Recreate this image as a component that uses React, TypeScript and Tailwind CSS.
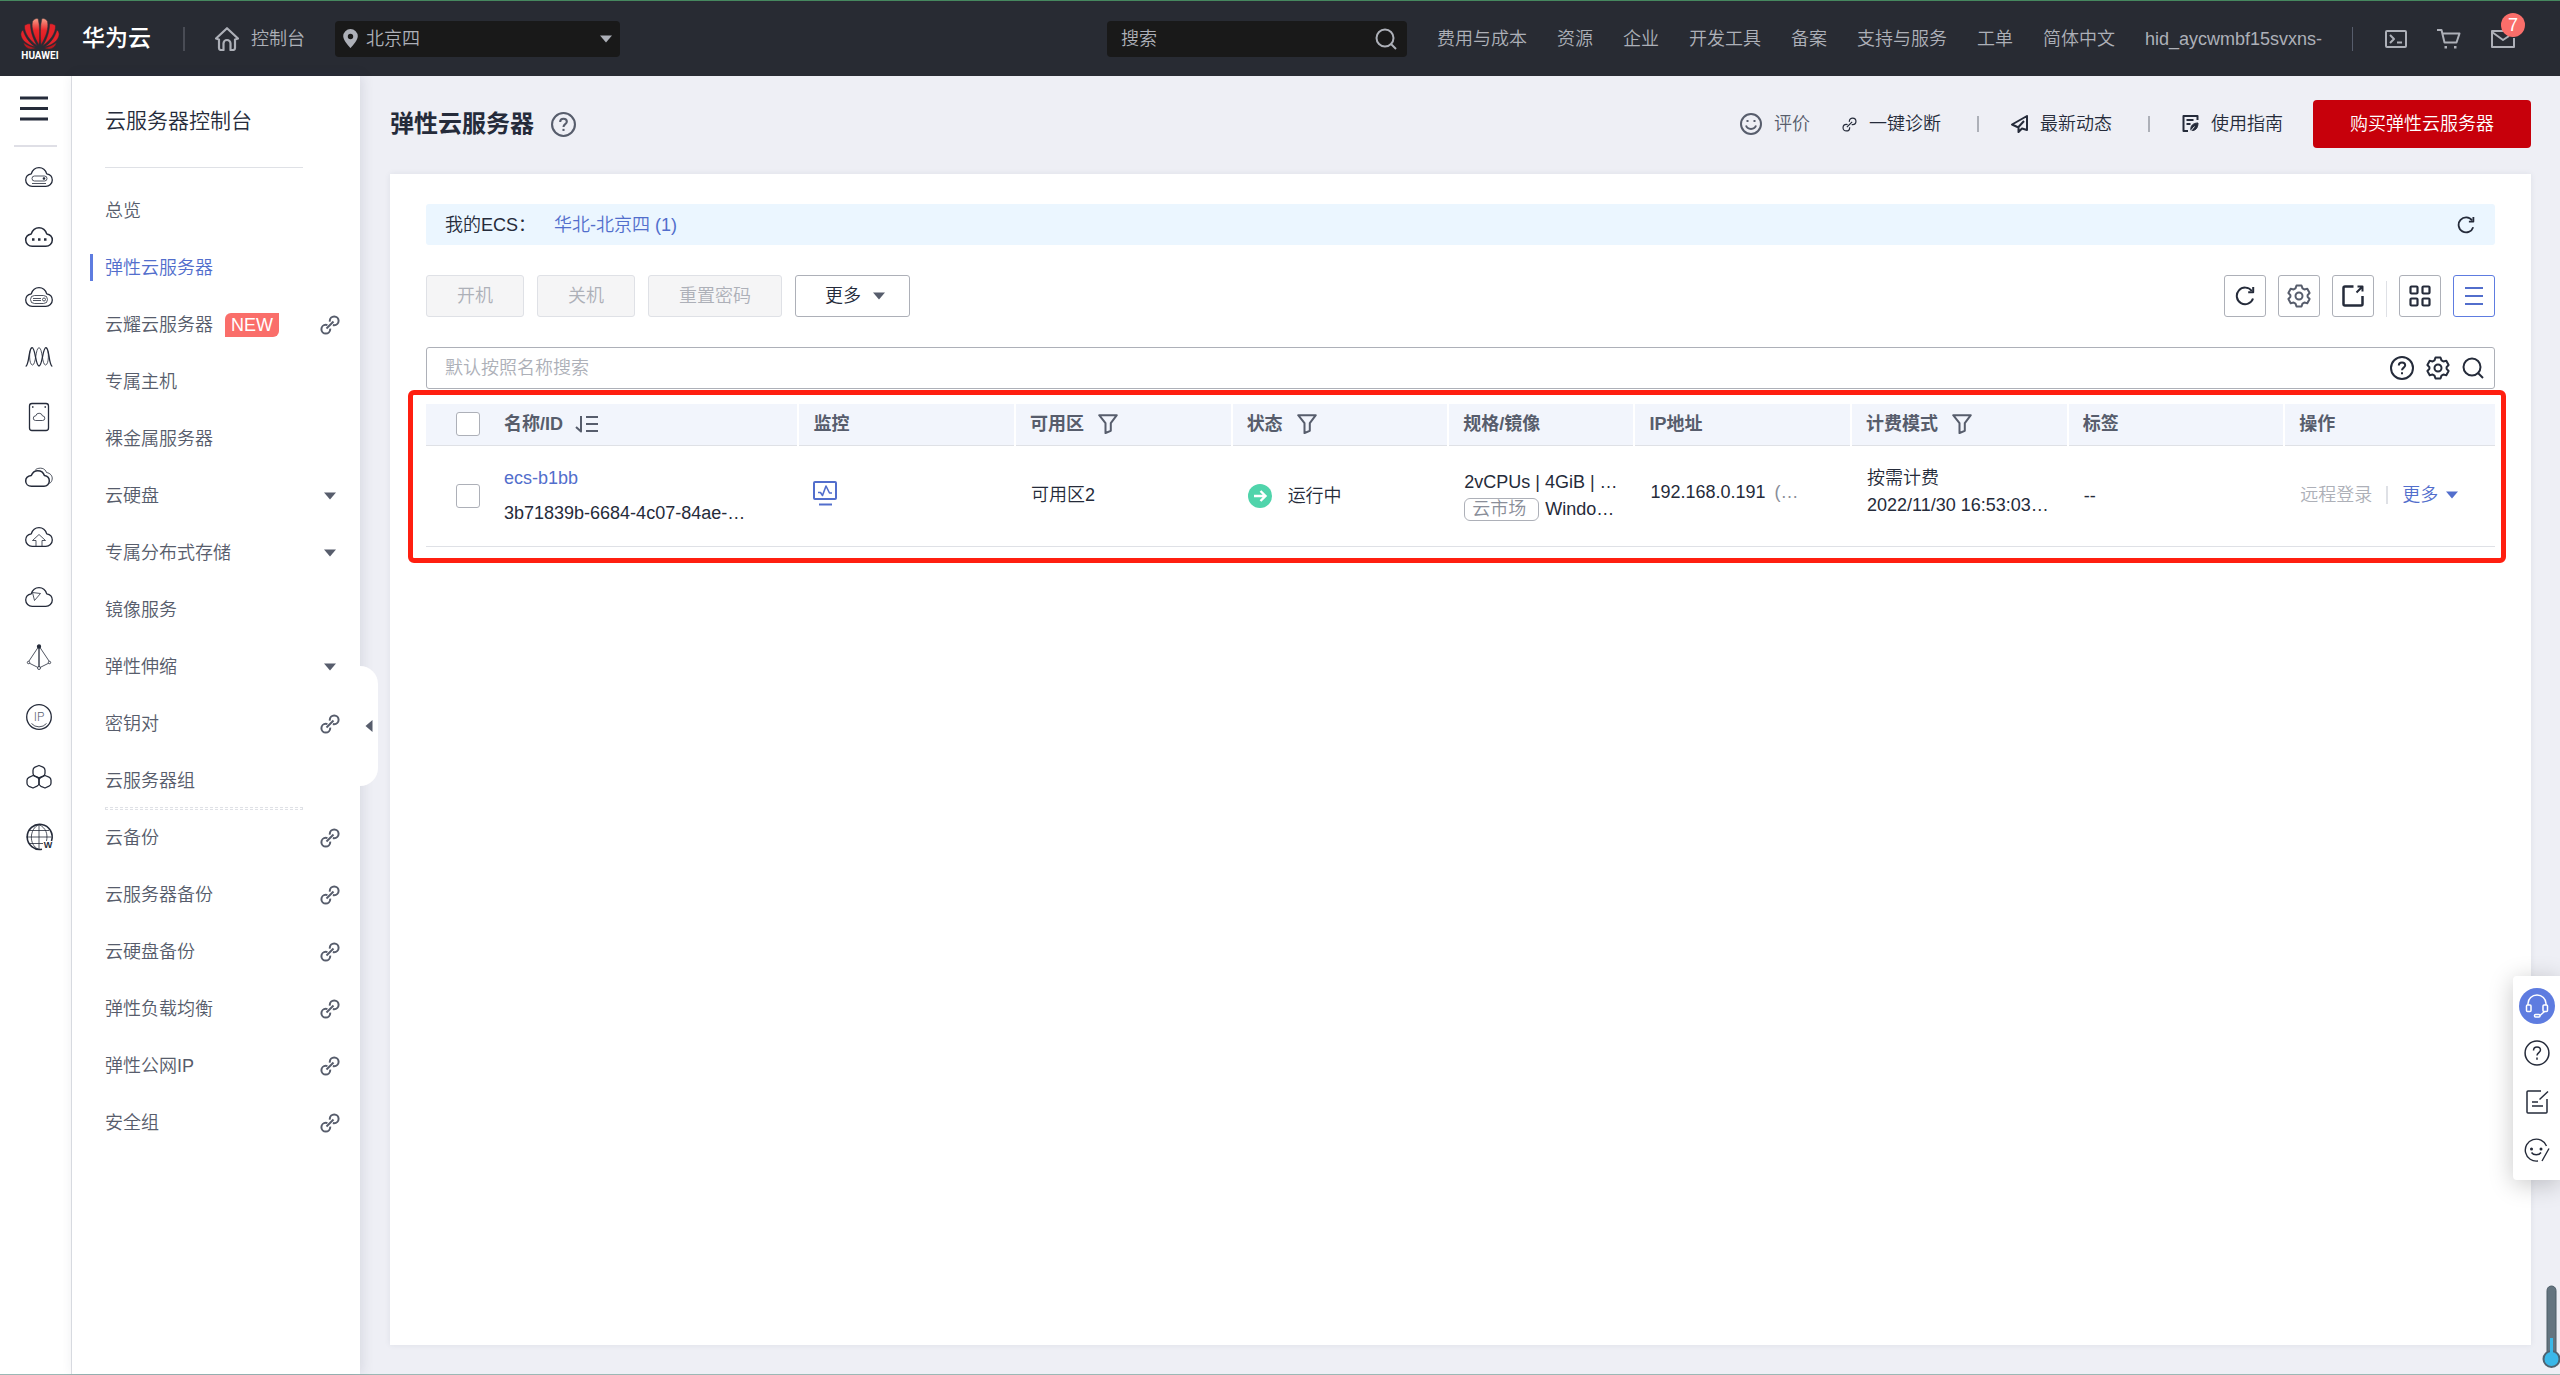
import { ReactNode } from 'react';
import clsx from 'clsx';

const CLOUD =
  'M7.2 19.3h13.6c3.6 0 6.500-2.700 6.500-6.200 0-3.300-2.400-5.700-5.600-6.200C20.500 3 17.800.7 14 .7S7.500 3 6.300 6.900C3.100 7.400.7 9.800.7 13.100c0 3.500 2.900 6.200 6.500 6.200z';

interface IconProps {
  w: number;
  h?: number;
  sw?: number;
  box?: string;
  children: ReactNode;
  className?: string;
}

function Icon({ w, h = w, sw = 2, box, children, className }: IconProps) {
  return (
    <svg
      width={w}
      height={h}
      viewBox={box || `0 0 ${w} ${h}`}
      fill="none"
      stroke="currentColor"
      strokeWidth={sw}
      strokeLinejoin="round"
      className={clsx('shrink-0', className)}
      aria-hidden="true"
    >
      {children}
    </svg>
  );
}

const Caret = ({ className }: { className?: string }) => (
  <svg width="12" height="8" viewBox="0 0 12 8" className={clsx('shrink-0', className)} aria-hidden="true">
    <path d="M0 .5h12L6 7.500z" fill="currentColor" />
  </svg>
);

const LinkIcon = ({ size = 20, sw = 2 }: { size?: number; sw?: number }) => (
  <Icon w={size} box="0 0 20 20" sw={sw}>
    <circle cx="14.200" cy="5.800" r="4.400" strokeDasharray="23.150 4.500" strokeDashoffset="-12.600" />
    <circle cx="5.800" cy="14.200" r="4.400" strokeDasharray="23.150 4.500" strokeDashoffset="-26.400" />
    <path d="M6.500 13.500l7-7" />
  </Icon>
);

const HelpIcon = ({ size = 24, sw = 2 }: { size?: number; sw?: number }) => (
  <Icon w={size} box="0 0 24 24" sw={sw}>
    <circle cx="12" cy="12" r="11" />
    <path d="M8.800 9.600c0-2 1.300-3.200 3.200-3.200s3.200 1.200 3.200 2.900c0 2.200-3.200 2.500-3.200 5" />
    <path d="M12 16.200v2" />
  </Icon>
);

const GearIcon = ({ sw = 2 }: { sw?: number }) => (
  <Icon w={24} sw={sw}>
    <path d="M9.500 1.500h5l1 2.900 1.800 1 3-.6 2.300 4.200-2 2.200v1.600l2 2.200-2.300 4.200-3-.6-1.800 1-1 2.900h-5l-1-2.900-1.800-1-3 .6L1.400 15l2-2.200v-1.600l-2-2.200 2.300-4.200 3 .6 1.800-1z" />
    <circle cx="12" cy="12" r="3.500" />
  </Icon>
);

const SearchIcon = () => (
  <Icon w={22} sw={2}>
    <circle cx="10" cy="10" r="8.500" />
    <path d="M16 16l5 5" />
  </Icon>
);

const RefreshIcon = ({ size = 20 }: { size?: number }) => (
  <Icon w={size} box="0 0 20 20" sw={2}>
    <path d="M18 12.500A8.300 8.300 0 1 1 16.800 5" />
    <path d="M18.200 1v5.200h-5" />
  </Icon>
);

const FunnelIcon = () => (
  <Icon w={20} sw={2}>
    <path d="M1.200 1.200h17.600l-6 8v7.600L7.500 19V9.200z" />
  </Icon>
);

function HuaweiLogo() {
  return (
    <svg width="40" height="44" viewBox="0 0 40 44" className="shrink-0" role="img" aria-label="HUAWEI">
      <defs>
        <linearGradient id="petal" x1="0" y1="0" x2="0" y2="1">
          <stop offset="0" stopColor="#f7a08a" />
          <stop offset=".45" stopColor="#e8262a" />
          <stop offset="1" stopColor="#d9121c" />
        </linearGradient>
      </defs>
      <g fill="url(#petal)" stroke="#282b33" strokeWidth=".5">
        <path d="M19 28C14 20 11 11 12.500 4.500c1-2.500 3.500-3 5.500-3 2 7 2 17.500 1 26.500z" />
        <path d="M21 28c5-8 8-17 6.500-23.500-1-2.500-3.500-3-5.500-3-2 7-2 17.500-1 26.500z" />
        <path d="M17.500 29C10 24 4 16 4.500 8.500c2-1.500 4-2 6-1.500 0 8 3 16 7 22z" fill="#e3232a" />
        <path d="M22.500 29C30 24 36 16 35.500 8.500c-2-1.500-4-2-6-1.500 0 8-3 16-7 22z" fill="#e3232a" />
        <path d="M15.500 30C7 28 1 23 .8 17c.4-2.500 1.200-3.500 2.400-3.800C5 20 10 26.500 15.500 30z" fill="#e3232a" />
        <path d="M24.500 30c8.500-2 14.500-7 14.700-13-.4-2.500-1.200-3.500-2.400-3.800C35 20 30 26.500 24.500 30z" fill="#e3232a" />
        <path d="M16 31c-3.500 1.500-7 1.500-9.500-.5C4.500 29 3.800 27.500 3.500 25.500 8 28.500 11 30 16 31z" fill="#b81a20" />
        <path d="M24 31c3.500 1.500 7 1.500 9.500-.5 2-1.500 2.700-3 3-5-4.500 3-7.500 4.500-12.500 5.500z" fill="#b81a20" />
      </g>
      <text x="20" y="41.500" textAnchor="middle" fontSize="10" fontWeight="700" fill="#fff" fontFamily="Roboto, sans-serif">
        HUAWEI
      </text>
    </svg>
  );
}

const TOP_LINKS = ['费用与成本', '资源', '企业', '开发工具', '备案', '支持与服务', '工单', '简体中文', 'hid_aycwmbf15svxns-'];

function TopBar() {
  return (
    <header className="flex h-19 items-center border-t border-[#46885f] bg-[#282b33] text-[#adb0b8]">
      <a href="#home" className="ml-5 flex items-center gap-5.5 text-white">
        <HuaweiLogo />
        <span className="text-[23px] font-medium">华为云</span>
      </a>
      <span className="ml-8 h-6 w-0.5 bg-[#494c55]" />
      <a href="#console" className="ml-7.5 flex items-center gap-3">
        <Icon w={24} sw={2.200}>
          <path d="M12 1.200L23 11.500l-3 1V21q0 2-2 2h-2.500v-6.500a3.500 3.500 0 0 0-7 0V23H6q-2 0-2-2v-8.500l-3-1z" />
        </Icon>
        控制台
      </a>
      <div className="ml-7.5 flex h-9 w-[285px] items-center rounded bg-[#191919] px-2">
        <svg width="15" height="19" viewBox="0 0 15 19" aria-hidden="true">
          <path fillRule="evenodd" fill="currentColor" d="M7.500 0A7.300 7.300 0 0 0 .2 7.300C.2 12 7.500 19 7.500 19s7.300-7 7.300-11.700A7.300 7.300 0 0 0 7.500 0zm0 4.800a2.700 2.700 0 1 1 0 5.400 2.700 2.700 0 0 1 0-5.400z" />
        </svg>
        <select aria-label="区域" className="ml-2 flex-1 appearance-none bg-transparent">
          <option>北京四</option>
        </select>
        <Caret />
      </div>
      <div className="mr-7.5 ml-auto flex h-9 w-[300px] items-center rounded bg-[#191919] pr-2.5 pl-3.5">
        <input type="search" aria-label="搜索" placeholder="搜索" className="min-w-0 flex-1 bg-transparent placeholder:text-[#adb0b8]" />
        <SearchIcon />
      </div>
      <nav className="flex items-center gap-7.5 whitespace-nowrap">
        {TOP_LINKS.map(label => (
          <a key={label} href="#top">{label}</a>
        ))}
      </nav>
      <span className="ml-7.5 h-6 w-px bg-[#575d6c]" />
      <div className="mr-[45px] ml-8 flex items-center gap-7.5">
        <button aria-label="CloudShell">
          <Icon w={22} h={18}>
            <rect x="1" y="1" width="20" height="16" rx="1" />
            <path d="M5 5l4 4-4 4M12 12.500h5" />
          </Icon>
        </button>
        <button aria-label="购物车">
          <Icon w={24} h={20}>
            <path d="M0 1h4.500l3 12.500h12L22.500 4.500H6" />
            <path d="M7.500 18.200h2.500M17 18.200h2.500" strokeWidth="2.600" />
          </Icon>
        </button>
        <button aria-label="消息" className="relative">
          <Icon w={24} h={20}>
            <path d="M15 2H1v16h22V9" />
            <path d="M1 3l11 8 6-4" />
          </Icon>
          <span className="absolute -top-4 left-2.5 flex size-6 items-center justify-center rounded-full bg-[#fa6e6a] text-white">7</span>
        </button>
      </div>
    </header>
  );
}

const RAIL_ICONS: { name: string; icon: ReactNode }[] = [
  {
    name: 'ECS',
    icon: (
      <>
        <path d={CLOUD} />
        <rect x="7" y="9" width="15" height="5" rx="2.500" strokeWidth=".8" />
        <path d="M7 16.500h14" strokeWidth=".8" />
        <circle cx="19" cy="11.500" r=".7" fill="currentColor" />
      </>
    ),
  },
  {
    name: 'HECS',
    icon: (
      <>
        <path d={CLOUD} strokeWidth="1.500" />
        <path d="M7 12.500h2.500M13 12.500h2.500M19 12.500h2.500" strokeWidth="2.500" />
      </>
    ),
  },
  {
    name: 'BMS',
    icon: (
      <>
        <path d={CLOUD} />
        <rect x="5.500" y="8.500" width="17" height="8" rx="4" strokeWidth=".8" />
        <path d="M8 11.500h8M8 13.500h8" strokeWidth=".8" />
        <circle cx="19" cy="12.500" r="1.500" strokeWidth=".8" />
      </>
    ),
  },
  {
    name: 'AS',
    icon: (
      <>
        <path d="M.7 19.500C4.500 18 3.500.7 7 .7S10.500 19 14 19 17.500.7 21 .7 23.500 18 27.300 19.500" />
        <path d="M7 .7C3.500 3 4 18 7.500 18S10.500.7 14 .7 17 18 20.500 18 24.500 3 21 .7" strokeWidth=".8" />
      </>
    ),
  },
  {
    name: 'EVS',
    icon: (
      <>
        <rect x="4.500" y="-3.500" width="19" height="27" rx="2.500" />
        <path d="M10.500 13.500h7a2.300 2.300 0 0 0 0-4.600 3.500 3.500 0 0 0-6.800 0 2.300 2.300 0 0 0-.2 4.600z" strokeWidth=".8" />
        <path d="M7 0h1.500M19.500 0H21" />
      </>
    ),
  },
  {
    name: 'CBR',
    icon: (
      <>
        <path d="M6.500 19.300H19c3 0 5.300-2.400 5.300-5.400 0-2.900-2-4.900-4.900-5.300C18.300 5.200 16 3.700 12.800 3.700S7.500 5.500 6.300 8.600C3 9 .7 11 .7 14c0 3 2.500 5.300 5.800 5.300z" strokeWidth="1.500" />
        <path d="M10.500 2.500C15 0 20 1 21.500 5.500c4 .7 6 3.500 5.700 6.500-.2 2-1.200 3.500-2.700 4.500" strokeWidth=".8" />
      </>
    ),
  },
  {
    name: 'OBS',
    icon: (
      <>
        <path d={CLOUD} />
        <path d="M11 19v-5.500H7.500L14 7.500l6.500 6H17V19" strokeWidth=".8" />
      </>
    ),
  },
  {
    name: 'SFS',
    icon: (
      <>
        <path d={CLOUD} />
        <path d="M7.500 5.500l8 1-6 7z" strokeWidth=".8" />
      </>
    ),
  },
  {
    name: 'ELB',
    icon: (
      <>
        <path d="M14 0v21" />
        <path d="M14-1L3 15.500 14 21l11-5.500z" strokeWidth=".8" />
        <circle cx="14" cy="-.5" r="1.500" fill="currentColor" />
        <circle cx="3.500" cy="15.500" r="1.200" fill="#fff" strokeWidth=".8" />
        <circle cx="24.500" cy="15.500" r="1.200" fill="#fff" strokeWidth=".8" />
        <circle cx="14" cy="21" r="1.500" fill="#fff" strokeWidth=".8" />
      </>
    ),
  },
  {
    name: 'EIP',
    icon: (
      <>
        <circle cx="14" cy="10" r="12.300" />
        <path d="M6.500 16.500a10 10 0 0 0 15 0" strokeWidth=".8" />
        <text x="14" y="14" textAnchor="middle" fontSize="12" fontFamily="Roboto, sans-serif" fill="#575d6c" stroke="none">IP</text>
      </>
    ),
  },
  {
    name: 'VPC',
    icon: (
      <>
        <path d="M14-1.500l4 1.700q2 1 2 3v3q0 2-2 3l-4 1.700-4-1.700q-2-1-2-3v-3q0-2 2-3z" />
        <path d="M8 8.500l4 1.700q2 1 2 3v3q0 2-2 3L8 21l-4-1.700q-2-1-2-3v-3q0-2 2-3z" />
        <path d="M20 8.500l4 1.700q2 1 2 3v3q0 2-2 3L20 21l-4-1.700q-2-1-2-3v-3q0-2 2-3z" />
      </>
    ),
  },
  {
    name: 'DNS',
    icon: (
      <>
        <path d="M26.500 14A12.500 12.500 0 1 0 17 22.200" strokeWidth="1.600" />
        <path d="M14-2.500v25M1.500 10h25M4 3.500h20M4 16.500h14" strokeWidth=".8" />
        <path d="M14-2.500C4 2 4 18 13 22M14-2.500C21 1 23 7 21.500 14" strokeWidth=".8" />
        <text x="23" y="21" textAnchor="middle" fontSize="9" fontWeight="700" fill="currentColor" stroke="none">W</text>
      </>
    ),
  },
];

function ServiceRail() {
  return (
    <aside className="w-18 shrink-0 border-r border-[#dfe1e6] bg-white text-[#252b3a]">
      <div className="flex h-[69px] items-center px-5 pb-1">
        <button aria-label="服务列表">
          <Icon w={28} h={25} sw={3}>
            <path d="M0 2h28M0 12.500h28M0 23h28" />
          </Icon>
        </button>
      </div>
      <div className="mx-3.5 h-0.5 bg-[#dfdfe6]" />
      <ul>
        {RAIL_ICONS.map(({ name, icon }) => (
          <li key={name}>
            <a href={`#${name}`} aria-label={name} className="flex h-15 items-center justify-center pl-1.5">
              <Icon w={28} h={20} sw={1.300} className="overflow-visible">{icon}</Icon>
            </a>
          </li>
        ))}
      </ul>
    </aside>
  );
}

interface MenuItem {
  label: string;
  active?: boolean;
  isNew?: boolean;
  end?: 'link' | 'caret';
  dividerAfter?: boolean;
}

const MENU: MenuItem[] = [
  { label: '总览' },
  { label: '弹性云服务器', active: true },
  { label: '云耀云服务器', isNew: true, end: 'link' },
  { label: '专属主机' },
  { label: '裸金属服务器' },
  { label: '云硬盘', end: 'caret' },
  { label: '专属分布式存储', end: 'caret' },
  { label: '镜像服务' },
  { label: '弹性伸缩', end: 'caret' },
  { label: '密钥对', end: 'link' },
  { label: '云服务器组', dividerAfter: true },
  { label: '云备份', end: 'link' },
  { label: '云服务器备份', end: 'link' },
  { label: '云硬盘备份', end: 'link' },
  { label: '弹性负载均衡', end: 'link' },
  { label: '弹性公网IP', end: 'link' },
  { label: '安全组', end: 'link' },
];

function SideMenu() {
  return (
    <aside className="relative w-72 shrink-0 bg-white shadow-[2px_0_12px_rgba(40,50,80,0.12)]">
      <h2 className="flex h-[91px] items-center pl-[33px] text-[21px] text-[#252b3a]">云服务器控制台</h2>
      <div className="ml-[33px] h-px w-[198px] bg-[#dfe1e6]" />
      <ul className="mt-3.5 text-[#575d6c]">
        {MENU.map(item => (
          <li key={item.label}>
            <a href="#menu" className="flex h-[57px] items-center pr-5">
              <span className={clsx('ml-[18px] h-[27px] w-[3px]', item.active && 'bg-[#5e7ce0]')} />
              <span className={clsx('ml-3', item.active && 'text-[#526ecc]')}>{item.label}</span>
              {item.isNew && (
                <span className="ml-3 flex h-6 items-center rounded-tl-md rounded-br-md bg-[#fa6e6a] px-1.5 text-white">NEW</span>
              )}
              <span className="ml-auto flex w-5 justify-center">
                {item.end === 'link' && <LinkIcon />}
                {item.end === 'caret' && <Caret />}
              </span>
            </a>
            {item.dividerAfter && <div className="-mt-0.5 -mb-px ml-[33px] h-[3px] w-[198px] border border-dashed border-[#dfe1e6]" />}
          </li>
        ))}
      </ul>
      <button
        aria-label="收起菜单"
        className="absolute top-[590px] left-full flex h-[120px] w-[18px] items-center justify-center rounded-r-[18px] bg-white text-[#575d6c]"
      >
        <Caret className="rotate-90" />
      </button>
    </aside>
  );
}

function PageHeading() {
  return (
    <div className="flex h-[98px] items-center pb-0.5 text-[#252b3a]">
      <h1 className="text-2xl font-bold">弹性云服务器</h1>
      <button aria-label="帮助" className="ml-[17px] text-[#575d6c]"><HelpIcon size={25} /></button>
      <a href="#rate" className="ml-auto flex items-center gap-3 text-[#575d6c]">
        <Icon w={22} sw={2}>
          <circle cx="11" cy="11" r="10" />
          <path d="M6 12.500c1.500 4.500 8.500 4.500 10 0M7.500 7v2M14.500 7v2" />
        </Icon>
        评价
      </a>
      <a href="#diagnose" className="ml-8 flex items-center gap-3"><LinkIcon size={15} sw={1.600} />一键诊断</a>
      <span className="mr-8 ml-9 h-4 w-0.5 bg-[#adb0b8]" />
      <a href="#news" className="flex items-center gap-3">
        <Icon w={17} h={18} sw={2}>
          <path d="M16 1v14l-5-1.500L7.500 17v-4.500L1 9.500zM7.500 12L13 6" />
        </Icon>
        最新动态
      </a>
      <span className="mr-8 ml-9 h-4 w-0.5 bg-[#adb0b8]" />
      <a href="#guide" className="flex items-center gap-3">
        <Icon w={17} h={18} sw={2}>
          <path d="M15.500 5V1H1.500v15H6M4.500 5h7M4.500 9h4" />
          <path d="M16 8c-5 0-8 3-7 7.500 4.500.5 7-2.500 7-7.500z" fill="currentColor" strokeWidth="1" />
          <path d="M7.500 17.500l5-6" stroke="#eeeff5" strokeWidth="1" />
        </Icon>
        使用指南
      </a>
      <button className="ml-7.5 h-12 rounded-sm bg-[#c7000b] px-[37px] text-white">购买弹性云服务器</button>
    </div>
  );
}

function ToolButton({ label, active, children }: { label: string; active?: boolean; children: ReactNode }) {
  return (
    <button
      aria-label={label}
      className={clsx(
        'flex size-[42px] items-center justify-center rounded-[3px] border',
        active ? 'border-[#5e7ce0] text-[#526ecc]' : 'border-[#adb0b8]'
      )}
    >
      {children}
    </button>
  );
}

function Toolbar() {
  return (
    <div className="mt-7.5 flex gap-[13px] text-[#252b3a]">
      {['开机', '关机', '重置密码'].map(label => (
        <button key={label} disabled className="h-[42px] rounded-[3px] border border-[#dfe1e6] bg-[#f5f5f6] px-[30px] text-[#adb0b8]">
          {label}
        </button>
      ))}
      <button className="flex h-[42px] items-center gap-3 rounded-[3px] border border-[#adb0b8] pr-6 pl-[29px]">
        更多 <Caret className="text-[#575d6c]" />
      </button>
      <div className="ml-auto flex items-center gap-3">
        <ToolButton label="刷新"><RefreshIcon /></ToolButton>
        <ToolButton label="设置"><span className="text-[#575d6c]"><GearIcon /></span></ToolButton>
        <ToolButton label="导出">
          <Icon w={22} sw={2.500}>
            <path d="M11.500 1.500H3q-1.500 0-1.500 1.500v16q0 1.500 1.500 1.500h16q1.500 0 1.500-1.500v-8" />
            <path d="M14.500 7.500l5-5M15.500 1.500h5v5" strokeWidth="2" />
          </Icon>
        </ToolButton>
        <span className="mt-1.5 h-9 w-px bg-[#dfe1e6]" />
        <ToolButton label="卡片视图">
          <Icon w={22} sw={2.200}>
            <rect x="1.500" y="1.500" width="7" height="7" rx="1" />
            <rect x="13.500" y="1.500" width="7" height="7" rx="1" />
            <rect x="1.500" y="13.500" width="7" height="7" rx="1" />
            <rect x="13.500" y="13.500" width="7" height="7" rx="1" />
          </Icon>
        </ToolButton>
        <ToolButton label="列表视图" active>
          <Icon w={18} sw={2}>
            <path d="M0 1h18M0 9h18M0 17h18" />
          </Icon>
        </ToolButton>
      </div>
    </div>
  );
}

const COLUMNS: { title: string; width: string; filter?: boolean }[] = [
  { title: '监控', width: 'w-[10.47%]' },
  { title: '可用区', width: 'w-[10.47%]', filter: true },
  { title: '状态', width: 'w-[10.47%]', filter: true },
  { title: '规格/镜像', width: 'w-[9%]' },
  { title: 'IP地址', width: 'w-[10.47%]' },
  { title: '计费模式', width: 'w-[10.47%]', filter: true },
  { title: '标签', width: 'w-[10.47%]' },
  { title: '操作', width: '' },
];

const CHECKBOX = 'size-6 shrink-0 appearance-none rounded-[3px] border border-[#adb0b8] bg-white';

function ServerTable() {
  return (
    <div className="mt-px -mr-[11px] -ml-[18px] rounded-md border-5 border-[#ff1f10] pt-[9px] pr-1.5 pb-[11px] pl-[13px]">
      <table className="w-full table-fixed text-left whitespace-nowrap text-[#252b3a]">
        <thead>
          <tr className="h-[41px] border-b border-[#dfe1e6] bg-[#f2f5fc] text-[#575d6c]">
            <th className="w-[18%] pl-7.5">
              <div className="flex items-center">
                <input type="checkbox" aria-label="全选" className={CHECKBOX} />
                <span className="ml-6">名称/ID</span>
                <Icon w={24} h={18} sw={2} className="ml-3">
                  <path d="M1 12l5 4.500V1M11 2h12M11 9h12M11 16h12" />
                </Icon>
              </div>
            </th>
            {COLUMNS.map(col => (
              <th key={col.title} className={clsx('border-l-2 border-white pl-3.5', col.width)}>
                <div className="flex items-center gap-3.5">
                  {col.title}
                  {col.filter && <FunnelIcon />}
                </div>
              </th>
            ))}
          </tr>
        </thead>
        <tbody>
          <tr className="h-[101px] border-b border-[#dfe1e6]">
            <td className="pr-13 pl-7.5">
              <div className="flex items-center">
                <input type="checkbox" aria-label="ecs-b1bb" className={CHECKBOX} />
                <div className="ml-6 min-w-0 leading-[35px]">
                  <a href="#ecs" className="block text-[#526ecc]">ecs-b1bb</a>
                  <div>3b71839b-6684-4c07-84ae-…</div>
                </div>
              </div>
            </td>
            <td className="pb-1 pl-[15px] text-[#526ecc]">
              <Icon w={24} h={25} sw={2}>
                <rect x="1" y="1" width="22" height="17" rx="1" />
                <path d="M6 23.500h13" />
                <path d="M5 11.500h2.500l2 3L13 5l3.500 7h2.500" strokeWidth="1.600" />
              </Icon>
            </td>
            <td className="pb-0.5 pl-4">可用区2</td>
            <td className="pl-4">
              <div className="flex items-center gap-4">
                <svg width="24" height="24" viewBox="0 0 24 24" aria-hidden="true">
                  <circle cx="12" cy="12" r="12" fill="#50d4ab" />
                  <path d="M6 12h11M12.500 7l5 5-5 5" fill="none" stroke="#fff" strokeWidth="2.400" />
                </svg>
                运行中
              </div>
            </td>
            <td className="pl-4 leading-[27px]">
              <div>2vCPUs | 4GiB | …</div>
              <div className="flex items-center gap-1.5">
                <span className="flex h-[23px] items-center rounded-md border border-[#adb0b8] pr-3 pl-[7px] text-[#8a8e99]">云市场</span>
                Windo…
              </div>
            </td>
            <td className="pb-2 pl-4">192.168.0.191 <span className="ml-1 text-[#8a8e99]">(…</span></td>
            <td className="pb-2 pl-4 leading-[27px]">
              <div>按需计费</div>
              <div>2022/11/30 16:53:03…</div>
            </td>
            <td className="pl-4">--</td>
            <td className="pb-0.5 pl-4">
              <div className="flex items-center">
                <button disabled className="text-[#adb0b8]">远程登录</button>
                <span className="mx-3.5 h-[18px] w-0.5 bg-[#dfe1e6]" />
                <button className="flex items-center gap-2 text-[#526ecc]">更多 <Caret /></button>
              </div>
            </td>
          </tr>
        </tbody>
      </table>
    </div>
  );
}

function HelpDock() {
  return (
    <>
      <div className="fixed right-0 bottom-[195px] flex h-[204px] w-[47px] flex-col items-center rounded-l bg-white pt-3 text-[#252b3a] shadow-[0_4px_24px_rgba(0,0,0,0.22)]">
        <button aria-label="在线客服" className="flex size-9 items-center justify-center rounded-full bg-[#5e7ce0] text-white">
          <Icon w={24} sw={1.500}>
            <path d="M3 11V9.500a9 8.500 0 0 1 18 0V11" />
            <rect x="1.500" y="11" width="4.500" height="6.500" rx="1" />
            <rect x="18" y="11" width="4.500" height="6.500" rx="1" />
            <path d="M19.500 17.500l-4.500 4" />
            <rect x="9.500" y="20.500" width="5.500" height="2.500" rx="1" />
          </Icon>
        </button>
        <button aria-label="帮助中心" className="mt-4"><HelpIcon size={26} sw={1.400} /></button>
        <button aria-label="建议反馈" className="mt-6">
          <Icon w={24} sw={1.500}>
            <path d="M16 1H3q-1 0-1 1v20q0 1 1 1h18q1 0 1-1V9M7 12h6M7 16h11" />
            <path d="M14.500 9.500L23 1.500" />
          </Icon>
        </button>
        <button aria-label="满意度评价" className="mt-6">
          <Icon w={26} h={24} sw={1.400}>
            <path d="M14 23a11 11 0 1 1 8.500-15M18 23l7-12.500" />
            <path d="M7.500 14.500c2 3 7.500 3 9.500 0" />
            <circle cx="7.500" cy="11" r=".8" fill="currentColor" />
            <circle cx="17" cy="11" r=".8" fill="currentColor" />
          </Icon>
        </button>
      </div>
      <svg width="18" height="84" viewBox="0 0 18 84" className="fixed right-0 bottom-1.5" aria-hidden="true">
        <rect x="5" y="1" width="9" height="72" rx="4.500" fill="#64747f" stroke="#4c5c67" />
        <circle cx="9.500" cy="74" r="8" fill="#3ab8e8" stroke="#4f6370" strokeWidth="2" />
        <rect x="8" y="53" width="3" height="18" fill="#3ab8e8" />
      </svg>
    </>
  );
}

export default function App() {
  return (
    <div className="flex min-h-screen flex-col border-b border-[#9bb8b5] bg-[#eeeff5] font-['Liberation_Sans','Noto_Sans_CJK_SC',sans-serif] text-lg font-[350]">
      <TopBar />
      <div className="flex flex-1">
        <ServiceRail />
        <SideMenu />
        <main className="flex min-w-0 flex-1 flex-col pr-[29px] pb-[29px] pl-7.5">
          <PageHeading />
          <section className="flex-1 bg-white pt-7.5 pr-9 pl-9 shadow-[0_0_6px_rgba(40,50,80,0.08)]">
            <div className="flex h-[41px] items-center rounded-[3px] bg-[#ebf6ff] pr-5 pl-[19px] text-[#252b3a]">
              我的ECS：
              <a href="#region" className="ml-[18px] text-[#526ecc]">华北-北京四 (1)</a>
              <button aria-label="刷新" className="ml-auto"><RefreshIcon size={18} /></button>
            </div>
            <Toolbar />
            <div className="mt-7.5 flex h-[42px] items-center gap-3 rounded-[3px] border border-[#adb0b8] pr-2.5 pl-[18px] text-[#252b3a]">
              <input type="text" aria-label="搜索服务器" placeholder="默认按照名称搜索" className="min-w-0 flex-1 placeholder:text-[#adb0b8]" />
              <button aria-label="搜索帮助"><HelpIcon /></button>
              <button aria-label="搜索设置"><GearIcon /></button>
              <button aria-label="搜索"><SearchIcon /></button>
            </div>
            <ServerTable />
          </section>
        </main>
      </div>
      <HelpDock />
    </div>
  );
}
